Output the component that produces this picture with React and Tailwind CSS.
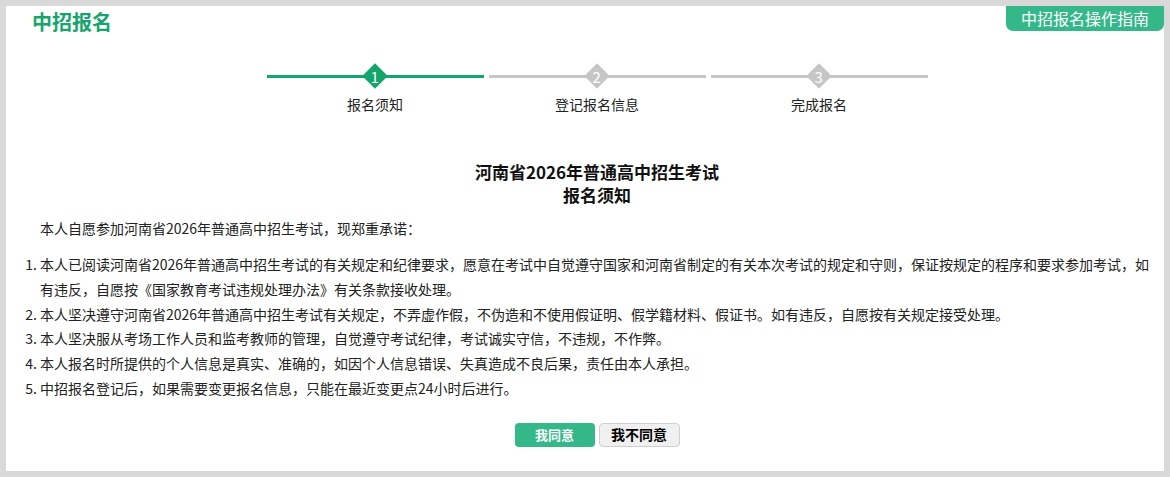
import React from 'react'

const steps = [
  { n: 1, label: '报名须知', active: true },
  { n: 2, label: '登记报名信息', active: false },
  { n: 3, label: '完成报名', active: false },
]

const rules = [
  '本人已阅读河南省2026年普通高中招生考试的有关规定和纪律要求，愿意在考试中自觉遵守国家和河南省制定的有关本次考试的规定和守则，保证按规定的程序和要求参加考试，如有违反，自愿按《国家教育考试违规处理办法》有关条款接收处理。',
  '本人坚决遵守河南省2026年普通高中招生考试有关规定，不弄虚作假，不伪造和不使用假证明、假学籍材料、假证书。如有违反，自愿按有关规定接受处理。',
  '本人坚决服从考场工作人员和监考教师的管理，自觉遵守考试纪律，考试诚实守信，不违规，不作弊。',
  '本人报名时所提供的个人信息是真实、准确的，如因个人信息错误、失真造成不良后果，责任由本人承担。',
  '中招报名登记后，如果需要变更报名信息，只能在最近变更点24小时后进行。',
]

function Step({ n, label, active }) {
  return (
    <div className="flex w-[217px] flex-col items-center">
      <div className="relative flex h-[24px] w-full items-center justify-center">
        <div className={`absolute left-0 right-0 top-[11px] h-[3px] ${active ? 'bg-[#13a56c]' : 'bg-[#c6c6c6]'}`} />
        <div className={`relative flex h-[18px] w-[18px] rotate-45 items-center justify-center ${active ? 'bg-[#13a56c]' : 'bg-[#c6c6c6]'}`}>
          <span className="-rotate-45 text-[15px] leading-none text-white">{n}</span>
        </div>
      </div>
      <div className="mt-[6px] text-[14px] leading-[20px] text-[#222]">{label}</div>
    </div>
  )
}

export default function App() {
  return (
    <div
      className="h-[477px] w-full bg-[#d9d9d9] p-[6px]"
      style={{ fontFamily: '"Noto Sans CJK SC", "Noto Sans", sans-serif' }}
    >
      <div className="flex h-full flex-col bg-white pr-[4px]">
        <div className="flex h-[30px] items-start justify-between">
          <h1 className="ml-[26px] mt-[2px] text-[20px] font-bold leading-[28px] text-[#17a56d]">中招报名</h1>
          <button className="-mr-[4px] h-[25px] rounded-b-[7px] bg-[#35b889] px-[15px] text-[16px] leading-[25px] text-white">
            中招报名操作指南
          </button>
        </div>

        <div className="mt-[28px] flex justify-center gap-[5px] pl-[28px]">
          {steps.map((s) => (
            <Step key={s.n} {...s} />
          ))}
        </div>

        <div className="mt-[46px] pl-[28px] text-center text-[17px] font-bold leading-[23px] text-[#111]">
          <div>河南省2026年普通高中招生考试</div>
          <div>报名须知</div>
        </div>

        <p className="mt-[10px] pl-[34px] text-[14px] leading-[25px] text-[#222]">
          本人自愿参加河南省2026年普通高中招生考试，现郑重承诺：
        </p>

        <ol className="mt-[11px] list-decimal pl-[34px] text-[14px] leading-[24.8px] text-[#222]">
          {rules.map((r, i) => (
            <li key={i}>{r}</li>
          ))}
        </ol>

        <div className="mt-[22px] flex justify-center gap-[4px] pl-[28px]">
          <button className="h-[24px] w-[80px] rounded-[4px] bg-[#35b889] text-[13px] font-bold text-white">我同意</button>
          <button className="h-[24px] w-[81px] rounded-[4px] border border-[#cfcfcf] bg-[#f0f0f0] text-[14px] font-bold text-black">我不同意</button>
        </div>
      </div>
    </div>
  )
}
